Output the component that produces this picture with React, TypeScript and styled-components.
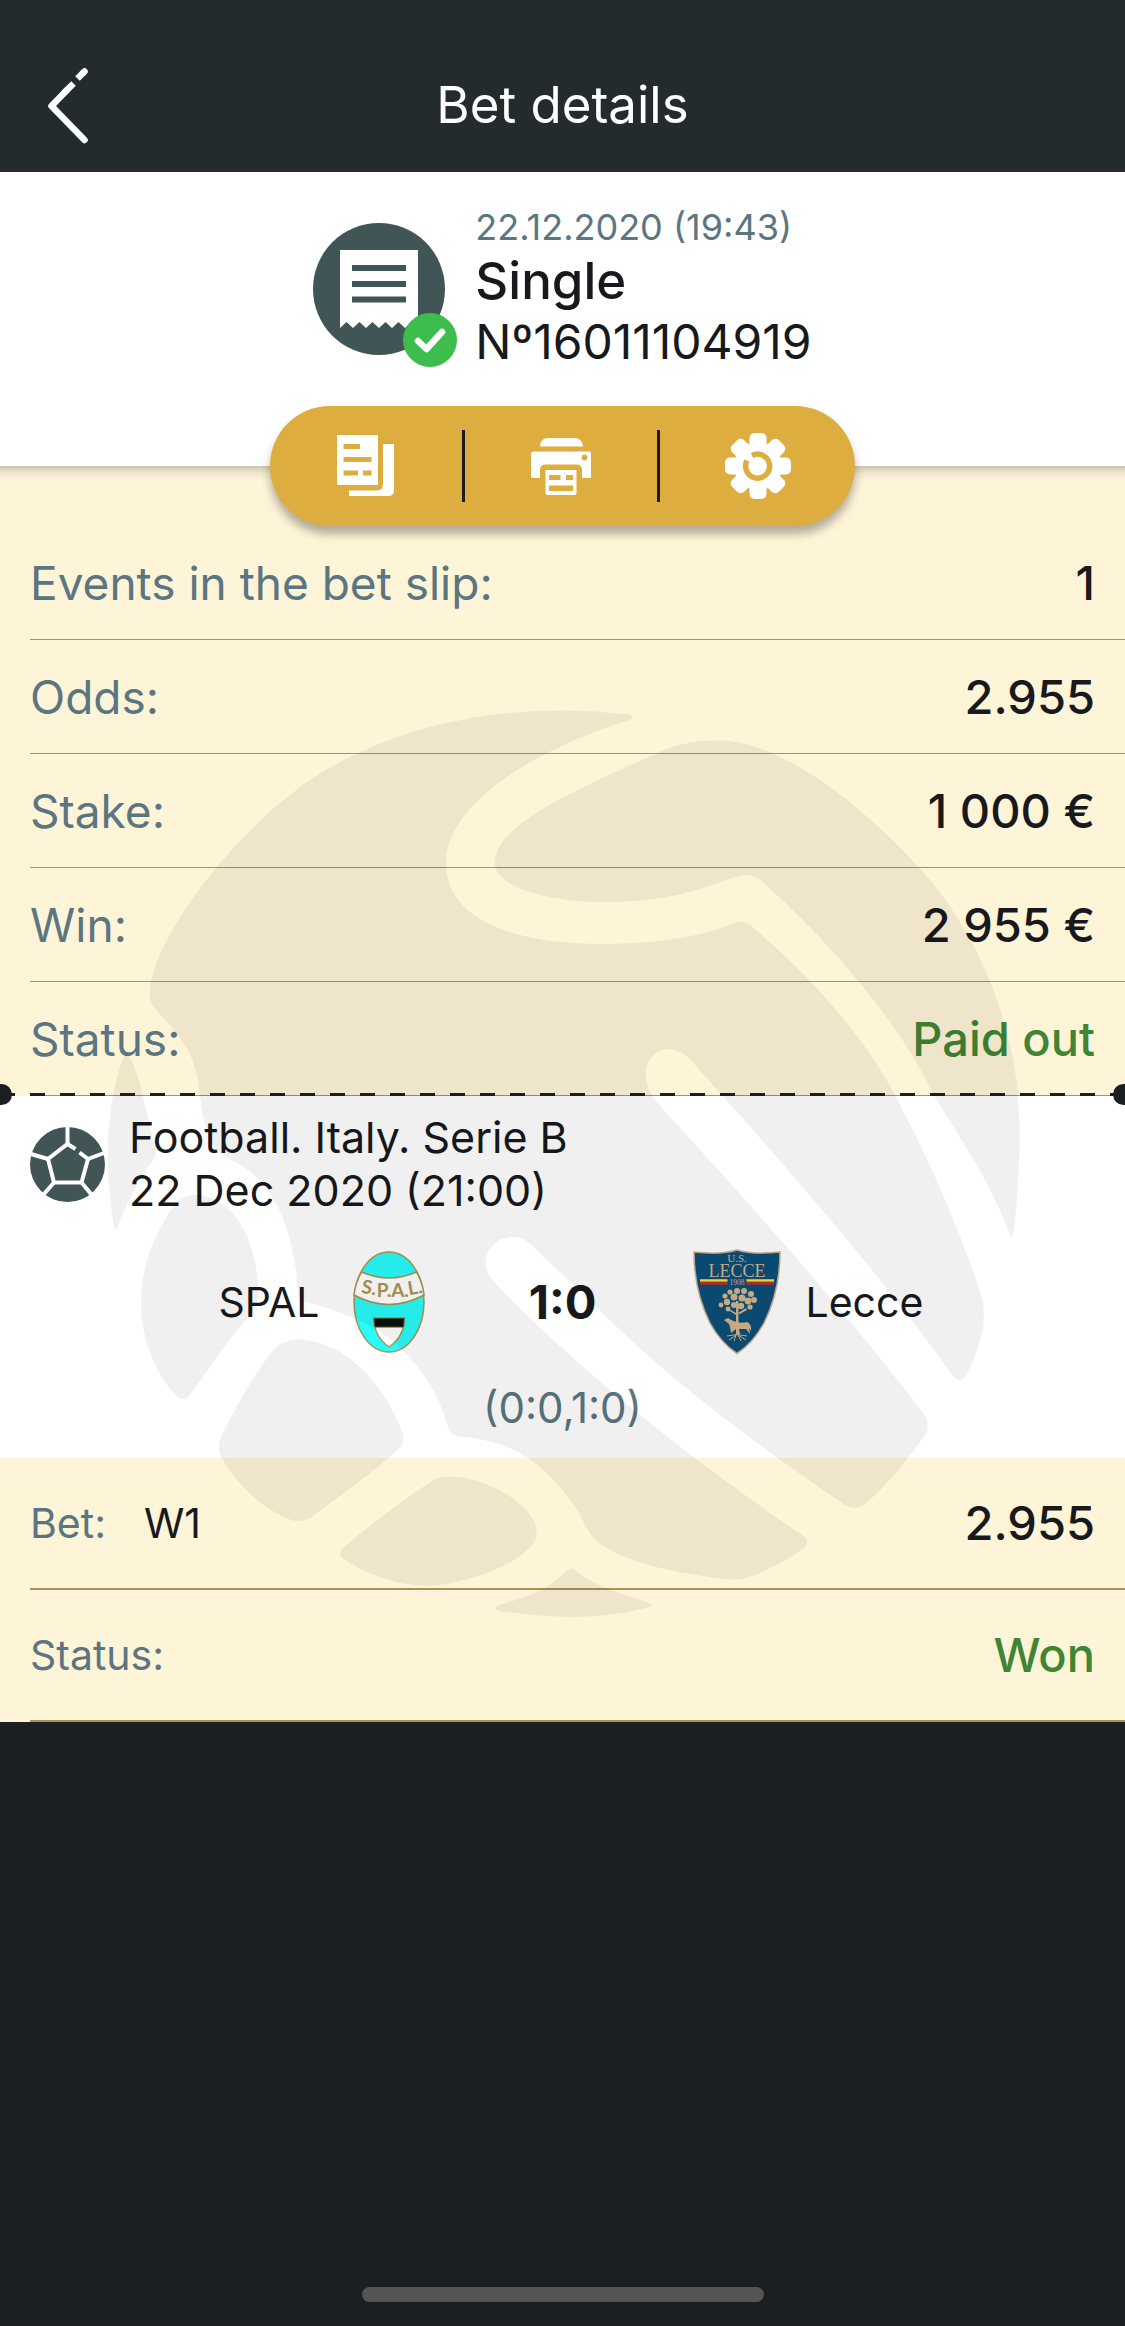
import React from "react";
import styled, { createGlobalStyle } from "styled-components";

const color = {
  ink: "#1b1f22",
  bar: "#242b2e",
  cream: "#fef4d8",
  line: "#a8945a",
  muted: "#5b7681",
  green: "#3f8533",
  gold: "#ddae3f",
  slate: "#415556",
  text: "#17191d",
};

const GlobalStyle = createGlobalStyle`
  *, *::before, *::after { box-sizing: border-box; }
  body {
    margin: 0;
    background: ${color.ink};
    color: ${color.text};
    font-family: Inter, "Liberation Sans", sans-serif;
  }
  h1, h2, p, dl, dt, dd { margin: 0; font-weight: 400; }
  button { border: 0; padding: 0; background: none; cursor: pointer; }
  svg { display: block; }
`;

const Screen = styled.div`
  display: flex;
  flex-direction: column;
  min-height: 100vh;
`;

const TopBar = styled.header`
  display: grid;
  grid-template-columns: 135px 1fr 135px;
  align-items: center;
  padding-top: 38px;
  height: 172px;
  background: ${color.bar};
`;

const BackButton = styled.button`
  display: flex;
  padding-left: 44px;
`;

const Title = styled.h1`
  text-align: center;
  font-size: 51px;
  line-height: 60px;
  color: #fff;
`;

const Summary = styled.section`
  display: flex;
  flex-direction: column;
  align-items: center;
  height: 294px;
  padding-top: 30px;
  background: #fff;
`;

const SummaryHead = styled.div`
  display: flex;
  gap: 18px;
`;

const TicketIcon = styled.svg`
  width: 144px;
  height: 144px;
  margin-top: 21px;
`;

const SummaryText = styled.div`
  display: flex;
  flex-direction: column;
`;

const DateText = styled.p`
  font-size: 36px;
  line-height: 50px;
  color: ${color.muted};
`;

const BetType = styled.h2`
  font-size: 51px;
  line-height: 58px;
  font-weight: 500;
`;

const BetNumber = styled.p`
  font-size: 48px;
  line-height: 64px;
`;

const Slip = styled.main`
  position: relative;
  display: flow-root;
  background: linear-gradient(rgba(0, 0, 0, 0.2), rgba(0, 0, 0, 0.06) 50%, transparent) 0 0 / 100% 14px no-repeat
    ${color.cream};
`;

const Toolbar = styled.nav`
  position: relative;
  display: grid;
  grid-template-columns: repeat(3, 1fr);
  width: 585px;
  height: 120px;
  margin: -60px auto 0;
  border-radius: 60px;
  background: ${color.gold};
  box-shadow: 0 8px 10px rgba(0, 0, 0, 0.3);
`;

const Tool = styled.button`
  display: flex;
  align-items: center;
  justify-content: center;
  height: 72px;
  margin: 24px 0;
  &:not(:last-child) {
    border-right: 3px solid #1f1b14;
  }
`;

const Lines = styled.dl`
  padding-left: 30px;
`;

const Line = styled.div<{ $tall?: boolean }>`
  display: flex;
  align-items: center;
  height: ${(p) => (p.$tall ? 132 : 114)}px;
  padding-right: 30px;
  border-bottom: ${(p) => (p.$tall ? 2 : 1)}px solid ${color.line};
`;

const Label = styled.dt<{ $small?: boolean }>`
  font-size: ${(p) => (p.$small ? 41 : 46)}px;
  line-height: 56px;
  color: ${color.muted};
`;

const Pick = styled.dd`
  margin-left: 38px;
  font-size: 41px;
  line-height: 56px;
`;

const Value = styled.dd<{ $won?: boolean }>`
  margin-left: auto;
  font-size: 47px;
  line-height: 56px;
  font-weight: 500;
  color: ${(p) => (p.$won ? color.green : color.text)};
`;

const Perforation = styled.div`
  position: relative;
  z-index: 1;
  height: 3px;
  margin-top: -3px;
  background: repeating-linear-gradient(90deg, ${color.ink} 0 15px, transparent 15px 30px);
`;

const Notch = styled.span<{ $side: "left" | "right" }>`
  position: absolute;
  top: -9px;
  ${(p) => p.$side}: 0;
  width: 12px;
  height: 21px;
  background: ${color.ink};
  border-radius: ${(p) => (p.$side === "left" ? "0 11px 11px 0" : "11px 0 0 11px")};
`;

const Event = styled.section`
  height: 362px;
  padding: 15px 30px 0;
  background: #fff;
`;

const EventHead = styled.div`
  display: flex;
  align-items: center;
  gap: 24px;
`;

const EventName = styled.p`
  font-size: 43px;
  line-height: 53px;
`;

const Match = styled.div`
  display: grid;
  grid-template-columns: 1fr 258px 1fr;
  align-items: center;
  margin-top: 29px;
  height: 112px;
`;

const Team = styled.div<{ $away?: boolean }>`
  display: flex;
  align-items: center;
  justify-content: ${(p) => (p.$away ? "flex-start" : "flex-end")};
  gap: 24px;
  font-size: 41px;
  line-height: 56px;
`;

const Crest = styled.span`
  display: flex;
  justify-content: center;
  width: 90px;
`;

const Score = styled.strong`
  text-align: center;
  font-size: 47px;
  line-height: 56px;
  font-weight: 700;
`;

const Periods = styled.p`
  margin-top: 22px;
  text-align: center;
  font-size: 42px;
  line-height: 56px;
  color: ${color.muted};
`;

const Watermark = styled.svg`
  position: absolute;
  z-index: 2;
  top: 224px;
  left: 50%;
  width: 940px;
  height: 950px;
  transform: translateX(-50%);
  pointer-events: none;
`;

const Footer = styled.footer`
  display: flex;
  justify-content: center;
  margin-top: auto;
  padding-bottom: 24px;
`;

const HomeIndicator = styled.div`
  width: 402px;
  height: 15px;
  border-radius: 8px;
  background: #545454;
`;

const BackIcon = () => (
  <svg width="50" height="80" viewBox="0 0 50 80" fill="none" stroke="#fff" strokeWidth="6.5">
    <path d="M40.500 6.500L39 8" strokeLinecap="round" />
    <path d="M40 7L33.500 13.500" />
    <path d="M29.500 18.500L20 28" />
    <path d="M23 25L7.500 41L40.500 75" strokeLinecap="round" strokeLinejoin="round" />
  </svg>
);

const Ticket = () => (
  <TicketIcon viewBox="0 0 144 144" aria-hidden="true">
    <circle cx="66" cy="66" r="66" fill={color.slate} />
    <path
      fill="#fff"
      d="M27 27H105V105L98.500 99L92 105L85.500 99L79 105L72.500 99L66 105L59.500 99L53 105L46.500 99L40 105L33.500 99L27 105Z"
    />
    <path stroke={color.slate} strokeWidth="6" d="M39 45H93M39 61H93M39 76.500H93" />
    <circle cx="117" cy="117" r="27" fill="#3dbd4c" />
    <path d="M105 118L113.500 126L129 109" fill="none" stroke="#fff" strokeWidth="6.500" strokeLinecap="round" strokeLinejoin="round" />
  </TicketIcon>
);

const CopyIcon = () => (
  <svg width="60" height="64" viewBox="0 0 60 64" fill="#fff">
    <path fillRule="evenodd" d="M1 1H42V51H1ZM7.500 10V15H24V10ZM7.500 23V28H35.500V23ZM7.500 36.500V41.500H22V36.500ZM27 36.500V41.500H35.500V36.500Z" />
    <path d="M47 10H58V56Q58 62 52 62H13V56.500H41Q47 56.500 47 50Z" />
  </svg>
);

const PrintIcon = () => (
  <svg width="60" height="58" viewBox="0 0 60 58" fill="#fff">
    <path d="M9 9.500Q9.500 1 17 1H43Q51.500 1 52 9.500Z" />
    <path
      fillRule="evenodd"
      d="M2 14.500H58Q60 14.500 60 17V41H51V33Q51 27.500 45.500 27.500H14.500Q9 27.500 9 33V41H2Q0 41 0 39V17Q0 14.500 2 14.500ZM53.500 17.500A2.800 3 0 1 0 53.500 23.500A2.800 3 0 1 0 53.500 17.500Z"
    />
    <path fillRule="evenodd" d="M14.500 33H45.500V56Q45.500 58 43.500 58H16.500Q14.500 58 14.500 56ZM18 38V43H29.500V38ZM35 38V43H42V38ZM18 48.500V54H42V48.500Z" />
  </svg>
);

const GearIcon = () => (
  <svg width="66" height="66" viewBox="0 0 66 66" fill="#fff">
    {[0, 45, 90, 135, 180, 225, 270, 315].map((a) => (
      <rect key={a} x="24.500" y="0" width="17" height="24" rx="5" transform={`rotate(${a} 33 33)`} />
    ))}
    <circle cx="33" cy="33" r="24" />
    <path d="M27 22.500A12 12 0 1 1 22 27.500" fill="none" stroke={color.gold} strokeWidth="5.500" />
  </svg>
);

const FootballIcon = () => (
  <svg width="75" height="75" viewBox="0 0 75 75" aria-hidden="true">
    <circle cx="37.500" cy="37.500" r="37.500" fill={color.slate} />
    <g fill="none" stroke="#fff" strokeWidth="4">
      <path d="M45.500 22L37.500 17L18 32L24 55.500H51.500L58 32L49.500 25.500" />
      <path d="M37.500 0V17M18 32L1 27M58 32L74 26M24 55.500L14 67M51.500 55.500L61 67" />
    </g>
  </svg>
);

const SpalCrest = () => (
  <svg width="72" height="102" viewBox="0 0 72 102" role="img" aria-label="SPAL crest">
    <ellipse cx="36" cy="51" rx="35" ry="50" fill="#28fbf9" stroke="#a9964f" strokeWidth="1.500" />
    <path d="M8.500 21Q36 33 63.500 21Q70 33 71 44Q36 63 1 44Q2 33 8.500 21Z" fill="#fff" stroke="#a9964f" strokeWidth="1.500" />
    <g fill="#a9964f" fontFamily="Lato, sans-serif" fontWeight="700" fontSize="19" textAnchor="middle">
      <text x="15" y="43" transform="rotate(10 15 43)">S.</text>
      <text x="31" y="46">P.</text>
      <text x="47" y="46">A.</text>
      <text x="63" y="43" transform="rotate(-10 63 43)">L.</text>
    </g>
    <path d="M20.500 67H51.500Q51 86 36 96Q21.500 86 20.500 67Z" fill="#fff" stroke="#a9964f" strokeWidth="1.500" />
    <path d="M21 67.500H51L50.500 76H22Z" fill="#08100f" stroke="#4d4a25" />
  </svg>
);

const LecceCrest = () => (
  <svg width="88" height="106" viewBox="0 0 88 106" role="img" aria-label="Lecce crest">
    <path d="M1 3Q28 6 44 1Q60 6 87 3Q87 42 71 74Q60 94 44 104.500Q28 94 17 74Q1 42 1 3Z" fill="#0b4e78" stroke="#c9b190" strokeWidth="1.500" />
    <g fill="#d2b48c" fontFamily="'Liberation Serif', serif" textAnchor="middle">
      <text x="44" y="13" fontSize="11">U.S.</text>
      <text x="44" y="27.500" fontSize="18">LECCE</text>
      <text x="44" y="36" fontSize="7.500">1908</text>
    </g>
    <path d="M7 31.500H34.500M53.500 31.500H81" stroke="#f2eb30" strokeWidth="2.500" />
    <path d="M7 34.300H34.500M53.500 34.300H81" stroke="#bf2d32" strokeWidth="3" />
    <g fill="#d2b48c">
      <circle cx="44" cy="42" r="3" />
      <circle cx="37" cy="43" r="2.600" />
      <circle cx="51" cy="42" r="3" />
      <circle cx="58" cy="45" r="3" />
      <circle cx="32" cy="47" r="2.600" />
      <circle cx="41" cy="48" r="3.500" />
      <circle cx="49" cy="49" r="3.500" />
      <circle cx="61" cy="51" r="3" />
      <circle cx="34" cy="53" r="3.200" />
      <circle cx="28" cy="56" r="2.400" />
      <circle cx="41" cy="56" r="3" />
      <circle cx="55" cy="52" r="3.400" />
      <circle cx="35" cy="60" r="2.400" />
      <circle cx="57" cy="58" r="2.600" />
      <circle cx="48" cy="57" r="3.200" />
      <path d="M43 52H45.500V86H43ZM36 60L43 64V66L35 61ZM53 59L45 64V66L54 61Z" />
      <path d="M31 71L35 69L38 71Q46 75 54 73Q59 75 58 82L56 79L57 85L53 80H46L47 85H45L43 80L38 84L37 78L36 75Z" />
    </g>
    <path d="M34 87Q44 84 54 87M36 91L43 86L41 92M53 91L45 86L48 92" fill="none" stroke="#d2b48c" strokeWidth="1" />
  </svg>
);

const GlobeWatermark = () => (
  <Watermark viewBox="-12 0 1568 1568" preserveAspectRatio="none" fill="#000" fillOpacity="0.06" aria-hidden="true">
    <path
      d="M884 41C892 44 888 48 878 51C720 100 577 190 577 285C577 380 690 419 840 419C930 418 1000 408 1060 384Q1074 380 1088 391
      C1200 485 1290 590 1342 700C1395 800 1440 910 1470 1000C1482 1040 1466 1090 1444 1132Q1434 1146 1422 1132
      C1330 1003 1200 850 1070 705L986 612C950 573 900 598 912 650Q916 664 928 680C1090 855 1230 1010 1372 1192Q1386 1212 1376 1230
      C1345 1272 1310 1315 1276 1344Q1258 1356 1240 1344C1060 1222 930 1120 840 1030L722 919C690 885 640 910 643 950Q645 964 656 976
      C800 1125 980 1265 1172 1396Q1186 1406 1172 1418C1140 1440 1110 1455 1080 1465Q1066 1470 1050 1468C960 1458 880 1442 832 1408
      C810 1390 805 1365 790 1345C740 1275 690 1240 600 1232Q584 1230 580 1216C560 1140 500 1070 440 1045C400 1025 360 1015 340 1009
      Q330 1006 330 994C325 910 300 815 222 778Q206 768 196 760C174 735 170 700 164 650C158 600 130 565 90 525Q81 515 83 495
      C92 400 240 210 380 130C520 50 700 18 884 41Z"
    />
    <path
      d="M1030 83C1120 83 1250 165 1375 303C1470 410 1520 550 1531 668C1536 740 1533 820 1524 892Q1521 912 1516 895C1480 800 1430 735 1390 668
      C1330 540 1200 400 1106 318Q1088 300 1062 308C1010 325 960 349 850 350C750 352 658 325 658 285C658 215 830 150 940 99Q980 83 1030 83Z"
    />
    <path d="M38 608Q44 596 50 608C68 640 74 690 92 755Q95 768 88 776C62 812 45 845 29 885Q24 896 22 880C8 790 8 690 38 608Z" />
    <path d="M153 833C215 833 258 890 264 990Q266 1008 256 1024C215 1070 185 1115 151 1162Q140 1178 126 1164C85 1120 68 1060 68 1010C68 950 90 900 122 852Q135 835 153 833Z" />
    <path d="M330 1072C405 1072 475 1145 504 1225Q510 1240 499 1252C455 1292 400 1330 352 1365Q334 1376 316 1369C265 1350 225 1305 202 1268Q193 1250 202 1232C225 1185 253 1135 285 1094Q302 1072 330 1072Z" />
    <path d="M582 1298C650 1298 728 1350 728 1390C728 1430 640 1468 560 1478C500 1480 450 1462 407 1435Q394 1426 406 1415C450 1378 495 1345 545 1311Q560 1298 582 1298Z" />
    <path d="M776 1456Q785 1445 796 1456C830 1482 870 1490 914 1506Q926 1511 914 1514C870 1526 830 1530 785 1530C740 1530 710 1526 666 1520Q652 1516 666 1510C705 1498 740 1490 776 1456Z" />
  </Watermark>
);

const totals = [
  { label: "Events in the bet slip:", value: "1" },
  { label: "Odds:", value: "2.955" },
  { label: "Stake:", value: "1 000 €" },
  { label: "Win:", value: "2 955 €" },
  { label: "Status:", value: "Paid out", won: true },
];

export default function App() {
  return (
    <Screen>
      <GlobalStyle />
      <TopBar>
        <BackButton type="button" aria-label="Back">
          <BackIcon />
        </BackButton>
        <Title>Bet details</Title>
      </TopBar>
      <Summary>
        <SummaryHead>
          <Ticket />
          <SummaryText>
            <DateText>22.12.2020 (19:43)</DateText>
            <BetType>Single</BetType>
            <BetNumber>Nº16011104919</BetNumber>
          </SummaryText>
        </SummaryHead>
      </Summary>
      <Slip>
        <Toolbar aria-label="Bet actions">
          <Tool type="button" aria-label="Copy">
            <CopyIcon />
          </Tool>
          <Tool type="button" aria-label="Print">
            <PrintIcon />
          </Tool>
          <Tool type="button" aria-label="Settings">
            <GearIcon />
          </Tool>
        </Toolbar>
        <Lines>
          {totals.map((t) => (
            <Line key={t.label}>
              <Label>{t.label}</Label>
              <Value $won={t.won}>{t.value}</Value>
            </Line>
          ))}
        </Lines>
        <Perforation>
          <Notch $side="left" />
          <Notch $side="right" />
        </Perforation>
        <Event>
          <EventHead>
            <FootballIcon />
            <EventName>
              Football. Italy. Serie B<br />
              22 Dec 2020 (21:00)
            </EventName>
          </EventHead>
          <Match>
            <Team>
              SPAL
              <Crest>
                <SpalCrest />
              </Crest>
            </Team>
            <Score>1:0</Score>
            <Team $away>
              <Crest>
                <LecceCrest />
              </Crest>
              Lecce
            </Team>
          </Match>
          <Periods>(0:0,1:0)</Periods>
        </Event>
        <Lines>
          <Line $tall>
            <Label $small>Bet:</Label>
            <Pick>W1</Pick>
            <Value>2.955</Value>
          </Line>
          <Line $tall>
            <Label $small>Status:</Label>
            <Value $won>Won</Value>
          </Line>
        </Lines>
        <GlobeWatermark />
      </Slip>
      <Footer>
        <HomeIndicator />
      </Footer>
    </Screen>
  );
}
